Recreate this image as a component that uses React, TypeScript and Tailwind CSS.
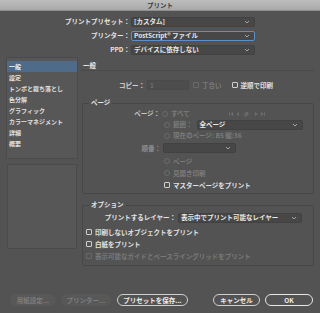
import React from 'react';

const font = { fontFamily: '"Noto Sans CJK JP", "Noto Sans", sans-serif' };

const Chevron = () => (
  <svg width="6" height="4" viewBox="0 0 6 4" className="shrink-0">
    <path d="M1 1l2 2 2-2" fill="none" stroke="#bdbdbd" strokeWidth="0.8" />
  </svg>
);

const Select = ({ value, w, focus }: { value: string; w: string; focus?: boolean }) => (
  <div
    className={`${w} h-[10px] flex items-center justify-between pl-[2px] pr-[4px] rounded-[2px] bg-[#474747] border ${
      focus ? 'border-[#5b8fc7]' : 'border-[#414141]'
    }`}
  >
    <span className="leading-none text-[#e8e8e8]">{value}</span>
    <Chevron />
  </div>
);

const Check = ({ label, dim }: { label: string; dim?: boolean }) => (
  <div className="flex items-center gap-[3px] h-[12px]">
    <div className={`w-[6px] h-[6px] rounded-[1px] border ${dim ? 'border-[#6a6a6a]' : 'border-[#cfcfcf]'}`} />
    <span className={`leading-none ${dim ? 'text-[#7a7a7a]' : 'text-[#e2e2e2]'}`}>{label}</span>
  </div>
);

const Radio = ({ label }: { label: React.ReactNode }) => (
  <div className="flex items-center gap-[3px]">
    <div className="w-[6px] h-[6px] rounded-full border border-[#6c6c6c]" />
    <span className="leading-none text-[#7c7c7c]">{label}</span>
  </div>
);

const NavIcons = () => (
  <svg width="42" height="8" viewBox="0 0 42 8" className="shrink-0">
    <g fill="#707070">
      <rect x="1" y="2" width="0.8" height="4" />
      <path d="M5 2v4L2.5 4z" />
      <path d="M11 2v4L8.5 4z" />
      <path d="M18 1.5l3 2-3 2.5-1-1 2-1.5-2-1z" />
      <circle cx="17.5" cy="5" r="1.5" fill="none" stroke="#707070" strokeWidth="0.7" />
      <path d="M27 2v4l2.5-2z" />
      <path d="M33 2v4l2.5-2z" />
      <rect x="36" y="2" width="0.8" height="4" />
    </g>
  </svg>
);

const sideItems = ['一般', '設定', 'トンボと裁ち落とし', '色分解', 'グラフィック', 'カラーマネジメント', '詳細', '概要'];

const Btn = ({ label, dim, primary, w }: { label: string; dim?: boolean; primary?: boolean; w: string }) => (
  <div
    className={`${w} h-[12px] rounded-full flex items-center justify-center leading-none ${
      dim
        ? 'bg-[#585858] text-[#7e7e7e]'
        : primary
        ? 'border-[1.5px] border-[#e6e6e6] text-[#f0f0f0] bg-[#535353]'
        : 'border border-[#cfcfcf] text-[#ececec] bg-[#535353]'
    }`}
  >
    {label}
  </div>
);

export default function App() {
  return (
    <div className="w-[320px] h-[313px] bg-[#535353] text-[6.5px] font-bold overflow-hidden flex flex-col" style={font}>
      <div className="h-[11px] shrink-0 bg-gradient-to-b from-[#bdbdbd] to-[#a9a9a9] border-b border-[#8e8e8e] flex items-center justify-center text-[#3a3a3a] leading-none">
        プリント
      </div>

      <div className="flex flex-col gap-[3px] pt-[5px]">
        <div className="flex items-center h-[11px]">
          <span className="w-[131px] text-right text-[#e4e4e4] pr-[1px] leading-none">プリントプリセット：</span>
          <Select value="[カスタム]" w="w-[124px]" />
        </div>
        <div className="flex items-center h-[11px]">
          <span className="w-[131px] text-right text-[#e4e4e4] pr-[1px] leading-none">プリンター：</span>
          <Select value="PostScript® ファイル" w="w-[124px]" focus />
        </div>
        <div className="flex items-center h-[11px]">
          <span className="w-[131px] text-right text-[#e4e4e4] pr-[1px] leading-none">PPD：</span>
          <Select value="デバイスに依存しない" w="w-[124px]" />
        </div>
      </div>

      <div className="flex mt-[2px] h-[209px] shrink-0">
        <div className="ml-[6px] w-[72px] flex flex-col gap-[5px]">
          <div className="h-[102px] bg-[#575757] border border-[#4b4b4b] pt-[3px] flex flex-col text-[6px]">
            {sideItems.map((s, i) => (
              <div
                key={s}
                className={`h-[11px] flex items-center px-[2px] leading-none ${
                  i === 0 ? 'bg-[#4e6b89] text-[#f2f2f2]' : 'text-[#e0e0e0]'
                }`}
              >
                {s}
              </div>
            ))}
          </div>
          <div className="h-[85px] bg-[#575757] border border-[#4b4b4b] mx-[1px]" />
        </div>

        <div className="flex-1 ml-[3px] mr-[6px] flex flex-col">
          <div className="h-[14px] border-b border-[#4a4a4a] flex items-center pl-[2px] pt-[4px] text-[#eaeaea] leading-none">
            一般
          </div>

          <div className="flex items-center h-[12px] mt-[8px]">
            <span className="w-[64px] text-right text-[#d4d4d4] leading-none">コピー：</span>
            <div className="w-[42px] h-[10px] bg-[#4d4d4d] border border-[#4a4a4a] ml-[2px] flex items-center pl-[2px] text-[#6f6f6f] leading-none">1</div>
            <div className="ml-[4px]">
              <Check label="丁合い" dim />
            </div>
            <div className="ml-[10px]">
              <Check label="逆順で印刷" />
            </div>
          </div>

          <div className="relative mt-[12px] h-[91px] shrink-0 border border-[#474747] rounded-[2px] ml-[1px]">
            <span className="absolute -top-[5px] left-[6px] px-[2px] bg-[#535353] text-[#e4e4e4] leading-none">ページ</span>
            <div className="flex flex-col pt-[4px]">
              <div className="flex items-center h-[11px]">
                <span className="w-[79px] text-right text-[#c8c8c8] leading-none pr-[2px]">ページ：</span>
                <Radio label="すべて" />
                <div className="ml-[38px]">
                  <NavIcons />
                </div>
              </div>
              <div className="flex items-center h-[11px] pl-[81px]">
                <Radio label="範囲：" />
                <div className="ml-[4px]">
                  <Select value="全ページ" w="w-[106px]" />
                </div>
              </div>
              <div className="flex items-center h-[11px] pl-[81px]">
                <Radio label="現在のページ: B5 縦:36" />
              </div>
              <div className="flex items-center h-[12px] mt-[1px]">
                <span className="w-[80px] text-right text-[#8e8e8e] leading-none pr-[2px]">順番：</span>
                <Select value="" w="w-[73px]" />
              </div>
              <div className="flex items-center h-[12px] pl-[81px] mt-[1px]">
                <Radio label="ページ" />
              </div>
              <div className="flex items-center h-[12px] pl-[81px]">
                <Radio label="見開き印刷" />
              </div>
              <div className="flex items-center h-[12px] pl-[81px]">
                <Check label="マスターページをプリント" />
              </div>
            </div>
          </div>

          <div className="relative mt-[11px] h-[61px] shrink-0 border border-[#474747] rounded-[2px] ml-[1px]">
            <span className="absolute -top-[5px] left-[6px] px-[2px] bg-[#535353] text-[#e4e4e4] leading-none">オプション</span>
            <div className="flex flex-col pt-[6px] pl-[3px]">
              <div className="flex items-center h-[11px]">
                <span className="w-[92px] text-right text-[#e4e4e4] leading-none pr-[2px]">プリントするレイヤー：</span>
                <Select value="表示中でプリント可能なレイヤー" w="w-[124px]" />
              </div>
              <div className="mt-[3px]">
                <Check label="印刷しないオブジェクトをプリント" />
              </div>
              <Check label="白紙をプリント" />
              <Check label="表示可能なガイドとベースライングリッドをプリント" dim />
            </div>
          </div>
        </div>
      </div>

      <div className="flex items-center mt-[28px] px-[10px]">
        <Btn label="用紙設定..." w="w-[46px]" dim />
        <div className="ml-[5px]">
          <Btn label="プリンター..." w="w-[50px]" dim />
        </div>
        <div className="ml-[6px]">
          <Btn label="プリセットを保存..." w="w-[71px]" />
        </div>
        <div className="ml-auto">
          <Btn label="キャンセル" w="w-[47px]" />
        </div>
        <div className="ml-[5px] mr-[-3px]">
          <Btn label="OK" w="w-[48px]" primary />
        </div>
      </div>
    </div>
  );
}
